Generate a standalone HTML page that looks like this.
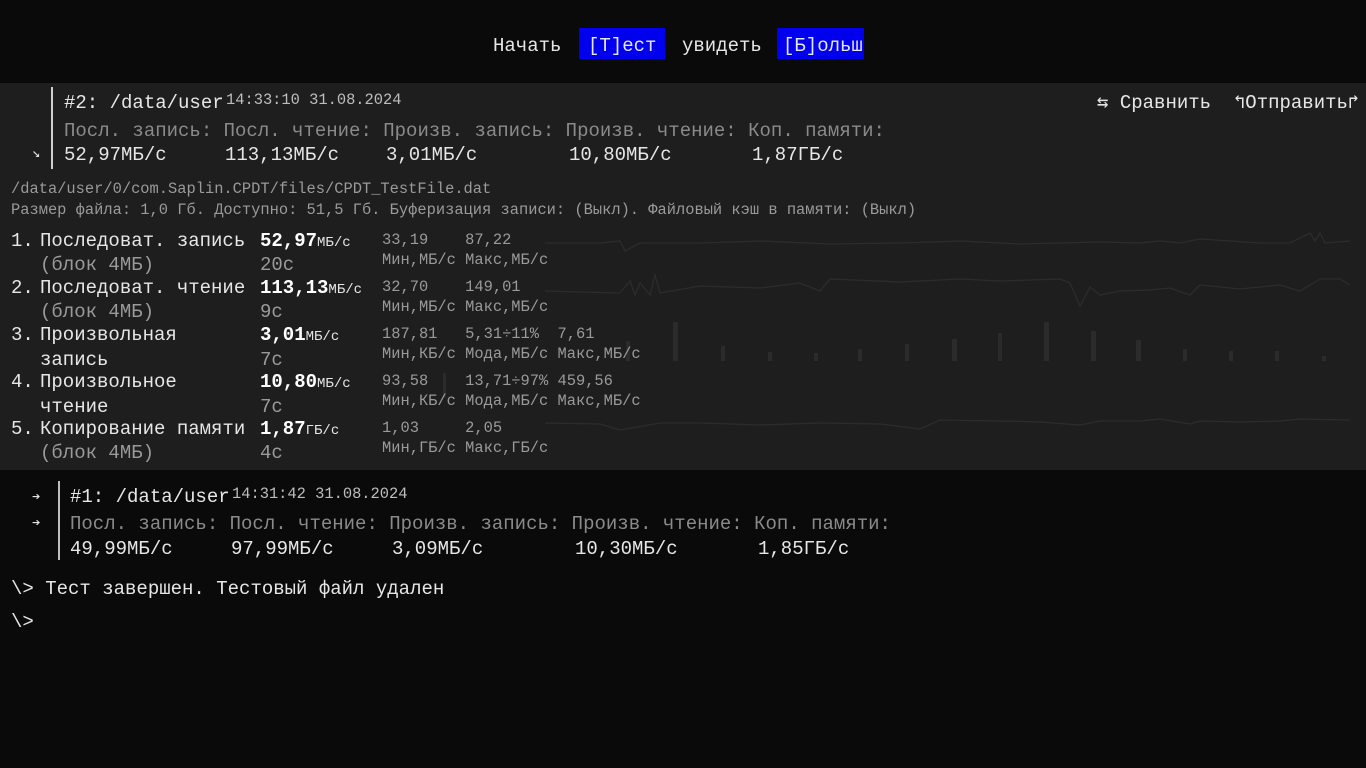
<!DOCTYPE html>
<html><head><meta charset="utf-8"><style>
html,body{margin:0;padding:0;background:#0a0a0a;width:1366px;height:768px;overflow:hidden}
body{font-family:"Liberation Mono","DejaVu Sans Mono",monospace;color:#e6e6e6;position:relative}
.t{position:absolute;white-space:pre;line-height:20px;font-size:19px;letter-spacing:0}
.s{position:absolute;white-space:pre;line-height:18px;font-size:15.4px;letter-spacing:0;color:#9a9a9a}
.g{color:#8a8a8a}
.b{font-weight:bold;color:#fff;font-size:19px}
.u{font-size:14px}
.d{color:#9a9a9a}
#panel{position:absolute;left:0;top:83px;width:1366px;height:387px;background:#1e1e1e}
.btn{position:absolute;background:#0000ee;top:28px;height:31px}
</style></head><body>
<div class="btn" style="left:579px;width:86px"></div>
<div class="btn" style="left:777px;width:87px"></div>
<div class="t" style="left:493px;top:36px">Начать</div>
<div class="t" style="left:588px;top:36px">[Т]ест</div>
<div class="t" style="left:682px;top:36px">увидеть</div>
<div class="t" style="left:783px;top:36px">[Б]ольш</div>

<div id="panel">
<svg width="1366" height="387" style="position:absolute;left:0;top:0">
<g fill="none" stroke="#2c2c2c" stroke-width="1.3">
<polyline points="545,160 600,160 620,158 625,168 640,160 700,160 760,158 830,161 900,160 960,158 1020,161 1060,160 1100,159 1140,160 1160,158 1180,160 1200,156 1230,158 1260,160 1290,160 1310,150 1315,158 1320,150 1325,160 1350,158"/>
<polyline points="545,208 620,210 630,198 635,212 640,200 650,212 655,192 660,210 700,203 760,205 800,200 820,208 830,196 900,199 960,196 1000,198 1060,196 1070,200 1080,223 1090,204 1100,212 1120,208 1150,207 1170,205 1190,212 1200,202 1240,206 1280,202 1300,208 1320,196 1340,196 1350,202"/>
<polyline points="545,340 600,341 620,347 660,340 700,340 760,342 820,340 880,341 920,346 940,337 1000,338 1040,339 1080,342 1100,338 1140,338 1160,336 1190,341 1200,338 1240,339 1280,338 1300,336 1350,337"/>
</g>
<g fill="#2b2b2b">
<rect x="626" y="258" width="4" height="20"/><rect x="673" y="239" width="5" height="39"/><rect x="721" y="263" width="4" height="15"/>
<rect x="768" y="269" width="4" height="9"/><rect x="814" y="270" width="4" height="8"/><rect x="858" y="266" width="4" height="12"/>
<rect x="905" y="261" width="4" height="17"/><rect x="952" y="256" width="5" height="22"/><rect x="998" y="250" width="4" height="28"/>
<rect x="1044" y="239" width="5" height="39"/><rect x="1091" y="248" width="5" height="30"/><rect x="1136" y="257" width="5" height="21"/>
<rect x="1183" y="266" width="4" height="12"/><rect x="1229" y="268" width="4" height="10"/><rect x="1275" y="268" width="4" height="10"/><rect x="1322" y="273" width="4" height="5"/>
<rect x="443" y="290" width="3" height="25"/>
</g>
</svg>
</div>

<div style="position:absolute;left:51px;top:87px;width:2px;height:82px;background:#cfcfcf"></div>
<div class="t" style="left:32px;top:144px;font-size:14px">↘</div>
<div class="t" style="left:64px;top:93px">#2: /data/user</div>
<div class="s" style="left:226px;top:91px;color:#bdbdbd">14:33:10 31.08.2024</div>
<div class="t" style="left:1097px;top:93px">⇆ Сравнить  ↰Отправить↱</div>
<div class="t g" style="left:64px;top:121px">Посл. запись: Посл. чтение: Произв. запись: Произв. чтение: Коп. памяти:</div>
<div class="t" style="left:64px;top:145px">52,97МБ/с</div>
<div class="t" style="left:225px;top:145px">113,13МБ/с</div>
<div class="t" style="left:386px;top:145px">3,01МБ/с</div>
<div class="t" style="left:569px;top:145px">10,80МБ/с</div>
<div class="t" style="left:752px;top:145px">1,87ГБ/с</div>

<div class="s" style="left:11px;top:180px">/data/user/0/com.Saplin.CPDT/files/CPDT_TestFile.dat</div>
<div class="s" style="left:11px;top:201px">Размер файла: 1,0 Гб. Доступно: 51,5 Гб. Буферизация записи: (Выкл). Файловый кэш в памяти: (Выкл)</div>

<div class="t" style="left:11px;top:231px">1.</div><div class="t" style="left:40px;top:231px">Последоват. запись</div>
<div class="t d" style="left:40px;top:255px">(блок 4МБ)</div>
<div class="t" style="left:260px;top:231px"><span class="b">52,97</span><span class="u">МБ/с</span></div>
<div class="t d" style="left:260px;top:255px">20с</div>
<div class="s" style="left:382px;top:231px">33,19    87,22</div>
<div class="s" style="left:382px;top:251px">Мин,МБ/с Макс,МБ/с</div>

<div class="t" style="left:11px;top:278px">2.</div><div class="t" style="left:40px;top:278px">Последоват. чтение</div>
<div class="t d" style="left:40px;top:302px">(блок 4МБ)</div>
<div class="t" style="left:260px;top:278px"><span class="b">113,13</span><span class="u">МБ/с</span></div>
<div class="t d" style="left:260px;top:302px">9с</div>
<div class="s" style="left:382px;top:278px">32,70    149,01</div>
<div class="s" style="left:382px;top:298px">Мин,МБ/с Макс,МБ/с</div>

<div class="t" style="left:11px;top:325px">3.</div><div class="t" style="left:40px;top:325px">Произвольная</div>
<div class="t" style="left:40px;top:350px">запись</div>
<div class="t" style="left:260px;top:325px"><span class="b">3,01</span><span class="u">МБ/с</span></div>
<div class="t d" style="left:260px;top:350px">7с</div>
<div class="s" style="left:382px;top:325px">187,81   5,31÷11%  7,61</div>
<div class="s" style="left:382px;top:345px">Мин,КБ/с Мода,МБ/с Макс,МБ/с</div>

<div class="t" style="left:11px;top:372px">4.</div><div class="t" style="left:40px;top:372px">Произвольное</div>
<div class="t" style="left:40px;top:397px">чтение</div>
<div class="t" style="left:260px;top:372px"><span class="b">10,80</span><span class="u">МБ/с</span></div>
<div class="t d" style="left:260px;top:397px">7с</div>
<div class="s" style="left:382px;top:372px">93,58    13,71÷97% 459,56</div>
<div class="s" style="left:382px;top:392px">Мин,КБ/с Мода,МБ/с Макс,МБ/с</div>

<div class="t" style="left:11px;top:419px">5.</div><div class="t" style="left:40px;top:419px">Копирование памяти</div>
<div class="t d" style="left:40px;top:443px">(блок 4МБ)</div>
<div class="t" style="left:260px;top:419px"><span class="b">1,87</span><span class="u">ГБ/с</span></div>
<div class="t d" style="left:260px;top:443px">4с</div>
<div class="s" style="left:382px;top:419px">1,03     2,05</div>
<div class="s" style="left:382px;top:439px">Мин,ГБ/с Макс,ГБ/с</div>

<div style="position:absolute;left:58px;top:481px;width:2px;height:79px;background:#bdbdbd"></div>
<div class="t" style="left:32px;top:488px;font-size:14px">➔</div>
<div class="t" style="left:32px;top:514px;font-size:14px">➔</div>
<div class="t" style="left:70px;top:487px">#1: /data/user</div>
<div class="s" style="left:232px;top:485px;color:#bdbdbd">14:31:42 31.08.2024</div>
<div class="t g" style="left:70px;top:514px">Посл. запись: Посл. чтение: Произв. запись: Произв. чтение: Коп. памяти:</div>
<div class="t" style="left:70px;top:539px">49,99МБ/с</div>
<div class="t" style="left:231px;top:539px">97,99МБ/с</div>
<div class="t" style="left:392px;top:539px">3,09МБ/с</div>
<div class="t" style="left:575px;top:539px">10,30МБ/с</div>
<div class="t" style="left:758px;top:539px">1,85ГБ/с</div>

<div class="t" style="left:11px;top:579px">\&gt; Тест завершен. Тестовый файл удален</div>
<div class="t" style="left:11px;top:612px">\&gt;</div>
</body></html>
